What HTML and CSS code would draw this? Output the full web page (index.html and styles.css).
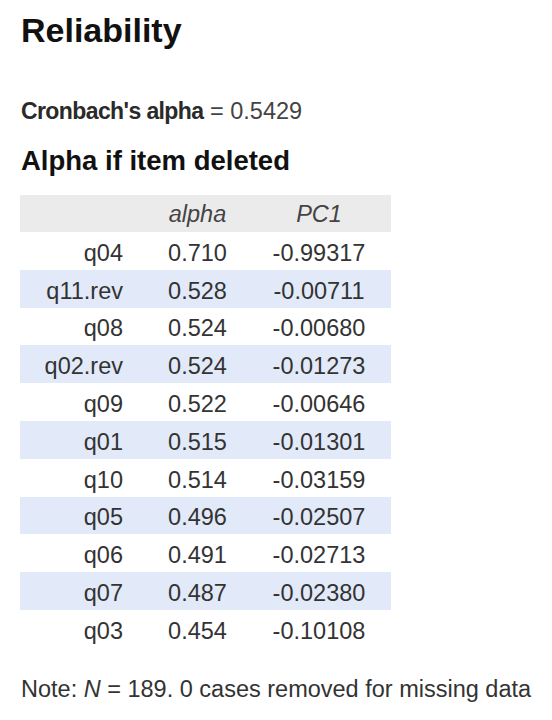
FILE: index.html
```html
<!DOCTYPE html>
<html lang="en">
<head>
<meta charset="utf-8">
<title>Reliability</title>
<link rel="stylesheet" href="styles.css">
</head>
<body>
<div class="page">
  <h1 class="title">Reliability</h1>
  <p class="alpha-line"><span class="alpha-label">Cronbach's alpha</span> = 0.5429</p>
  <h2 class="subtitle">Alpha if item deleted</h2>
  <table class="results">
    <thead>
      <tr><th class="name"></th><th>alpha</th><th>PC1</th></tr>
    </thead>
    <tbody>
      <tr><td class="name">q04</td><td>0.710</td><td>-0.99317</td></tr>
      <tr class="alt"><td class="name">q11.rev</td><td>0.528</td><td>-0.00711</td></tr>
      <tr><td class="name">q08</td><td>0.524</td><td>-0.00680</td></tr>
      <tr class="alt"><td class="name">q02.rev</td><td>0.524</td><td>-0.01273</td></tr>
      <tr><td class="name">q09</td><td>0.522</td><td>-0.00646</td></tr>
      <tr class="alt"><td class="name">q01</td><td>0.515</td><td>-0.01301</td></tr>
      <tr><td class="name">q10</td><td>0.514</td><td>-0.03159</td></tr>
      <tr class="alt"><td class="name">q05</td><td>0.496</td><td>-0.02507</td></tr>
      <tr><td class="name">q06</td><td>0.491</td><td>-0.02713</td></tr>
      <tr class="alt"><td class="name">q07</td><td>0.487</td><td>-0.02380</td></tr>
      <tr><td class="name">q03</td><td>0.454</td><td>-0.10108</td></tr>
    </tbody>
  </table>
  <p class="note">Note: <i>N</i> = 189. 0 cases removed for missing data</p>
</div>
</body>
</html>
```

FILE: styles.css
```css
html, body {
  margin: 0;
  padding: 0;
  background: #ffffff;
}

body {
  font-family: "Liberation Sans", Arial, sans-serif;
  color: #333333;
}

.page {
  padding: 10px 0 0 21px;
}

.title {
  margin: 0;
  font-size: 34px;
  line-height: 40px;
  font-weight: bold;
  color: #111111;
}

.alpha-line {
  margin: 47px 0 0 0;
  font-size: 23.5px;
  line-height: 28px;
  color: #444444;
}

.alpha-label {
  font-weight: bold;
  color: #2a2a2a;
  letter-spacing: -0.6px;
  font-size: 23px;
}

.subtitle {
  margin: 19.5px 0 0 0;
  font-size: 27.5px;
  line-height: 32px;
  font-weight: bold;
  color: #111111;
}

.results {
  margin: 18px 0 0 -1px;
  border-collapse: collapse;
  font-size: 23.5px;
  color: #333333;
}

.results th {
  background: #ebebeb;
  font-weight: normal;
  font-style: italic;
  color: #444444;
  height: 34.5px;
  padding: 3px 0 0 0;
  text-align: center;
}

.results td {
  height: 33px;
  padding: 4.8px 0 0 0;
  text-align: center;
}

.results th:nth-child(1), .results td:nth-child(1) {
  width: 103px;
  padding-right: 25px;
  text-align: right;
}

.results th:nth-child(2), .results td:nth-child(2) {
  width: 99px;
}

.results th:nth-child(3), .results td:nth-child(3) {
  width: 144px;
}

.results tr.alt td {
  background: #e2eaf9;
}

.note {
  margin: 27px 0 0 0;
  font-size: 23.5px;
  line-height: 28px;
  color: #333333;
}
```
